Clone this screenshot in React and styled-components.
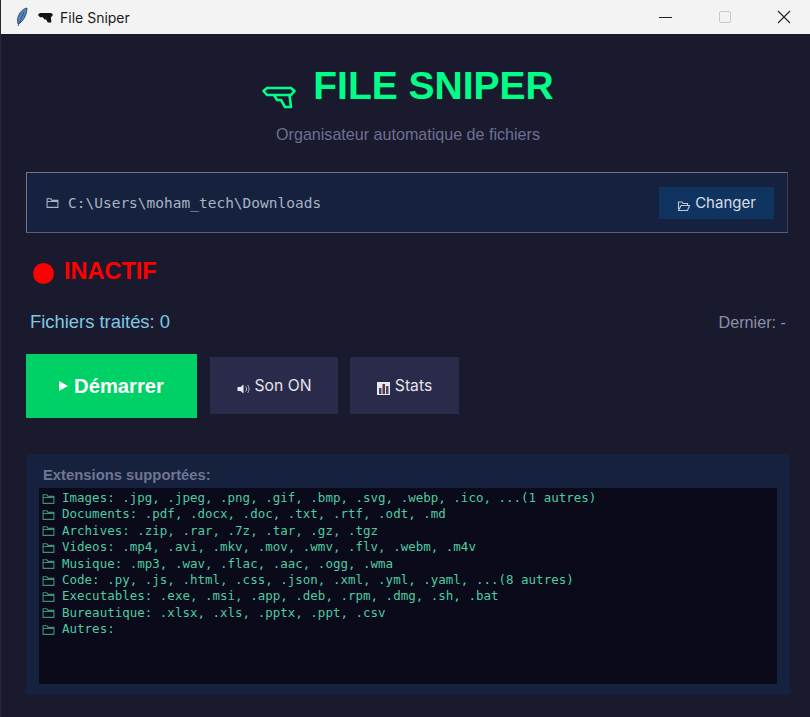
import React from 'react';
import styled, { createGlobalStyle } from 'styled-components';

const Global = createGlobalStyle`
  html, body {
    margin: 0;
    padding: 0;
    background: #1a1a2e;
  }
  * {
    box-sizing: border-box;
  }
`;

const Win = styled.div`
  width: 810px;
  height: 717px;
  display: flex;
  flex-direction: column;
  overflow: hidden;
  background: #1a1a2e;
  border-left: 1px solid #2a2a30;
  font-family: 'Liberation Sans', Arial, sans-serif;
`;

const TitleBar = styled.div`
  height: 34px;
  flex: none;
  display: flex;
  align-items: center;
  padding-left: 14px;
  background: #f3f3f3;
  color: #1a1a1a;
  font-family: 'Inter', 'Liberation Sans', sans-serif;
  font-size: 14px;
`;

const TitleText = styled.span`
  margin-left: 7px;
`;

const WinBtns = styled.div`
  margin-left: auto;
  margin-right: -3px;
  display: flex;
  height: 100%;
`;

const WinBtn = styled.div`
  width: 59px;
  display: flex;
  align-items: center;
  justify-content: center;
`;

const Main = styled.div`
  flex: 1;
  padding: 0 20px 0 25px;
  display: flex;
  flex-direction: column;
`;

const Head = styled.div`
  height: 138px;
  display: flex;
  flex-direction: column;
  align-items: center;
  padding-top: 30px;
`;

const Logo = styled.div`
  display: flex;
  align-items: flex-start;
  gap: 17px;
  color: #00ff88;
  font-size: 39px;
  font-weight: 700;
  line-height: 44px;
`;

const LogoIcon = styled.span`
  display: block;
  height: 24px;
  margin-top: 21px;
`;

const Sub = styled.div`
  margin-top: 16px;
  color: #6f6f92;
  font-size: 16.1px;
  line-height: 18px;
`;

const PathBox = styled.div`
  height: 61px;
  margin-right: 2px;
  display: flex;
  align-items: center;
  padding: 0 13px 0 19px;
  background: #16213e;
  border: 1px solid #70768c;
  border-right-color: #3a3f52;
  border-bottom-color: #5a6076;
`;

const PathText = styled.span`
  margin-left: 9px;
  color: #a6b4c6;
  font-family: 'DejaVu Sans Mono', monospace;
  font-size: 14.5px;
`;

const ChangeBtn = styled.div`
  margin-left: auto;
  width: 115px;
  height: 32px;
  display: flex;
  align-items: center;
  justify-content: center;
  gap: 4px;
  background: #0f3460;
  color: #d8dde6;
  font-family: 'Inter', 'Liberation Sans', sans-serif;
  font-size: 15px;
`;

const Status = styled.div`
  margin: 24px 0 0 7px;
  height: 28px;
  display: flex;
  align-items: center;
  gap: 10px;
  color: #ff0000;
  font-size: 23.5px;
  font-weight: 700;
`;

const Dot = styled.span`
  width: 21px;
  height: 21px;
  margin-top: 4px;
  border-radius: 50%;
  background: #ff0000;
`;

const Counters = styled.div`
  margin-top: 26px;
  padding: 0 4px 0 4px;
  height: 22px;
  display: flex;
  align-items: flex-start;
  justify-content: space-between;
`;

const Count = styled.span`
  color: ${(p) => p.$color};
  font-size: ${(p) => p.$size}px;
  line-height: 22px;
`;

const Actions = styled.div`
  margin-top: 21px;
  display: flex;
  align-items: flex-start;
  gap: 12px;
`;

const Start = styled.div`
  width: 171px;
  height: 64px;
  margin-right: 1px;
  display: flex;
  align-items: center;
  justify-content: center;
  gap: 6px;
  background: #00d166;
  color: #fff;
  font-size: 20.2px;
  font-weight: 700;
`;

const Small = styled.div`
  width: ${(p) => p.$w}px;
  height: 57px;
  margin-top: 3px;
  display: flex;
  align-items: center;
  justify-content: center;
  gap: 5px;
  background: #2a2a4a;
  color: #e4e4ee;
  font-family: 'Inter', 'Liberation Sans', sans-serif;
  font-size: 15.7px;
`;

const Panel = styled.div`
  margin-top: 36px;
  height: 241px;
  padding: 13px 12px 11px 13px;
  display: flex;
  flex-direction: column;
  background: #16213e;
`;

const PanelLabel = styled.div`
  padding-left: 4px;
  color: #6f7690;
  font-size: 14.8px;
  font-weight: 700;
  line-height: 16px;
  height: 21px;
`;

const List = styled.div`
  flex: 1;
  margin-right: 1px;
  padding: 2px 0 0 3px;
  background: #0a0a1a;
  color: #4ecca3;
  font-family: 'DejaVu Sans Mono', monospace;
  font-size: 12.5px;
  line-height: 16.38px;
`;

const Line = styled.div`
  display: flex;
  align-items: center;
  gap: 7px;
  white-space: pre;
`;

const Folder = ({ color = '#3f8f78' }) => (
  <svg width="13" height="13" viewBox="0 0 12 12" fill="none" stroke={color} strokeWidth="1">
    <path d="M1 10.5V2.5h3.5l1 1.5H11v6.5z M1 5h10" />
  </svg>
);

const OpenFolder = () => (
  <svg width="14" height="13" viewBox="0 0 14 13" fill="none" stroke="#c4c8d0" strokeWidth="1.1" style={{ marginTop: 5 }}>
    <path d="M1.5 10V3h3.5l1 1.5h4.5V6 M1.5 11.5h9l2-5H4l-2.5 5z" />
  </svg>
);

const Gun = ({ color, w, h, width, fill = 'none' }) => (
  <svg width={w} height={h} viewBox="0 0 34 24" fill={fill} stroke={color} strokeWidth={width} strokeLinejoin="round" strokeLinecap="round" style={{ display: 'block' }}>
    <path d="M1.5 6 5 3h24l3.5 3L29 10H5z" />
    <path d="M12 10l3 5h4l4 7h6l-1.5-12" />
  </svg>
);

const Feather = () => (
  <svg width="14" height="20" viewBox="0 0 14 20">
    <path d="M12 1C7 2 3 7 2.5 13L3 17l2-1c4-3 7-9 7-15z" fill="#4a86c8" stroke="#26384e" strokeWidth="0.8" />
    <path d="M9 5 3 19" stroke="#4a5560" strokeWidth="1" />
  </svg>
);

const Speaker = () => (
  <svg width="13" height="10" viewBox="0 0 12 10" style={{ marginTop: 6 }}>
    <path d="M0 3h3l3-2.5v9L3 7H0z" fill="#e8e8f0" />
    <path d="M8 2.5c1.5 1.5 1.5 3.5 0 5 M10 1c2 2 2 6 0 8" fill="none" stroke="#b8b8c8" strokeWidth="1" />
  </svg>
);

const Chart = () => (
  <svg width="13" height="13" viewBox="0 0 13 13" style={{ marginTop: 6 }}>
    <rect width="13" height="13" fill="#e8e8f0" />
    <rect x="2" y="6" width="2.5" height="6" fill="#3b4a6e" />
    <rect x="5.5" y="2" width="2.5" height="10" fill="#6a3030" />
    <rect x="9" y="4" width="2.5" height="8" fill="#3b4a6e" />
  </svg>
);

const extensions = [
  'Images: .jpg, .jpeg, .png, .gif, .bmp, .svg, .webp, .ico, ...(1 autres)',
  'Documents: .pdf, .docx, .doc, .txt, .rtf, .odt, .md',
  'Archives: .zip, .rar, .7z, .tar, .gz, .tgz',
  'Videos: .mp4, .avi, .mkv, .mov, .wmv, .flv, .webm, .m4v',
  'Musique: .mp3, .wav, .flac, .aac, .ogg, .wma',
  'Code: .py, .js, .html, .css, .json, .xml, .yml, .yaml, ...(8 autres)',
  'Executables: .exe, .msi, .app, .deb, .rpm, .dmg, .sh, .bat',
  'Bureautique: .xlsx, .xls, .pptx, .ppt, .csv',
  'Autres:',
];

export default function App() {
  return (
    <>
      <Global />
      <Win>
        <TitleBar>
          <Feather />
          <span style={{ width: 9 }} />
          <Gun color="#111" fill="#111" w={15} h={11} width={2.6} />
          <TitleText>File Sniper</TitleText>
          <WinBtns>
            <WinBtn>
              <svg width="13" height="13" viewBox="0 0 13 13">
                <path d="M0 6.5h13" stroke="#222" strokeWidth="1" />
              </svg>
            </WinBtn>
            <WinBtn>
              <svg width="12" height="12" viewBox="0 0 12 12">
                <rect x="0.5" y="0.5" width="11" height="11" rx="1.5" fill="none" stroke="#c8c8c8" />
              </svg>
            </WinBtn>
            <WinBtn>
              <svg width="14" height="14" viewBox="0 0 14 14">
                <path d="M1 1l12 12M13 1L1 13" stroke="#222" strokeWidth="1.1" />
              </svg>
            </WinBtn>
          </WinBtns>
        </TitleBar>
        <Main>
          <Head>
            <Logo>
              <LogoIcon>
                <Gun color="#00ff88" w={34} h={24} width={2.6} />
              </LogoIcon>
              FILE SNIPER
            </Logo>
            <Sub>Organisateur automatique de fichiers</Sub>
          </Head>
          <PathBox>
            <Folder color="#a6b4c6" />
            <PathText>C:\Users\moham_tech\Downloads</PathText>
            <ChangeBtn>
              <OpenFolder />
              Changer
            </ChangeBtn>
          </PathBox>
          <Status>
            <Dot />
            INACTIF
          </Status>
          <Counters>
            <Count $color="#7ec8e3" $size={18.4}>Fichiers traités: 0</Count>
            <Count $color="#8a90a8" $size={16.2}>Dernier: -</Count>
          </Counters>
          <Actions>
            <Start>
              <svg width="9" height="10" viewBox="0 0 9 10">
                <path d="M0 0l9 5-9 5z" fill="#fff" />
              </svg>
              Démarrer
            </Start>
            <Small $w={128}>
              <Speaker />
              Son ON
            </Small>
            <Small $w={109}>
              <Chart />
              Stats
            </Small>
          </Actions>
          <Panel>
            <PanelLabel>Extensions supportées:</PanelLabel>
            <List>
              {extensions.map((line) => (
                <Line key={line}>
                  <Folder />
                  {line}
                </Line>
              ))}
            </List>
          </Panel>
        </Main>
      </Win>
    </>
  );
}
